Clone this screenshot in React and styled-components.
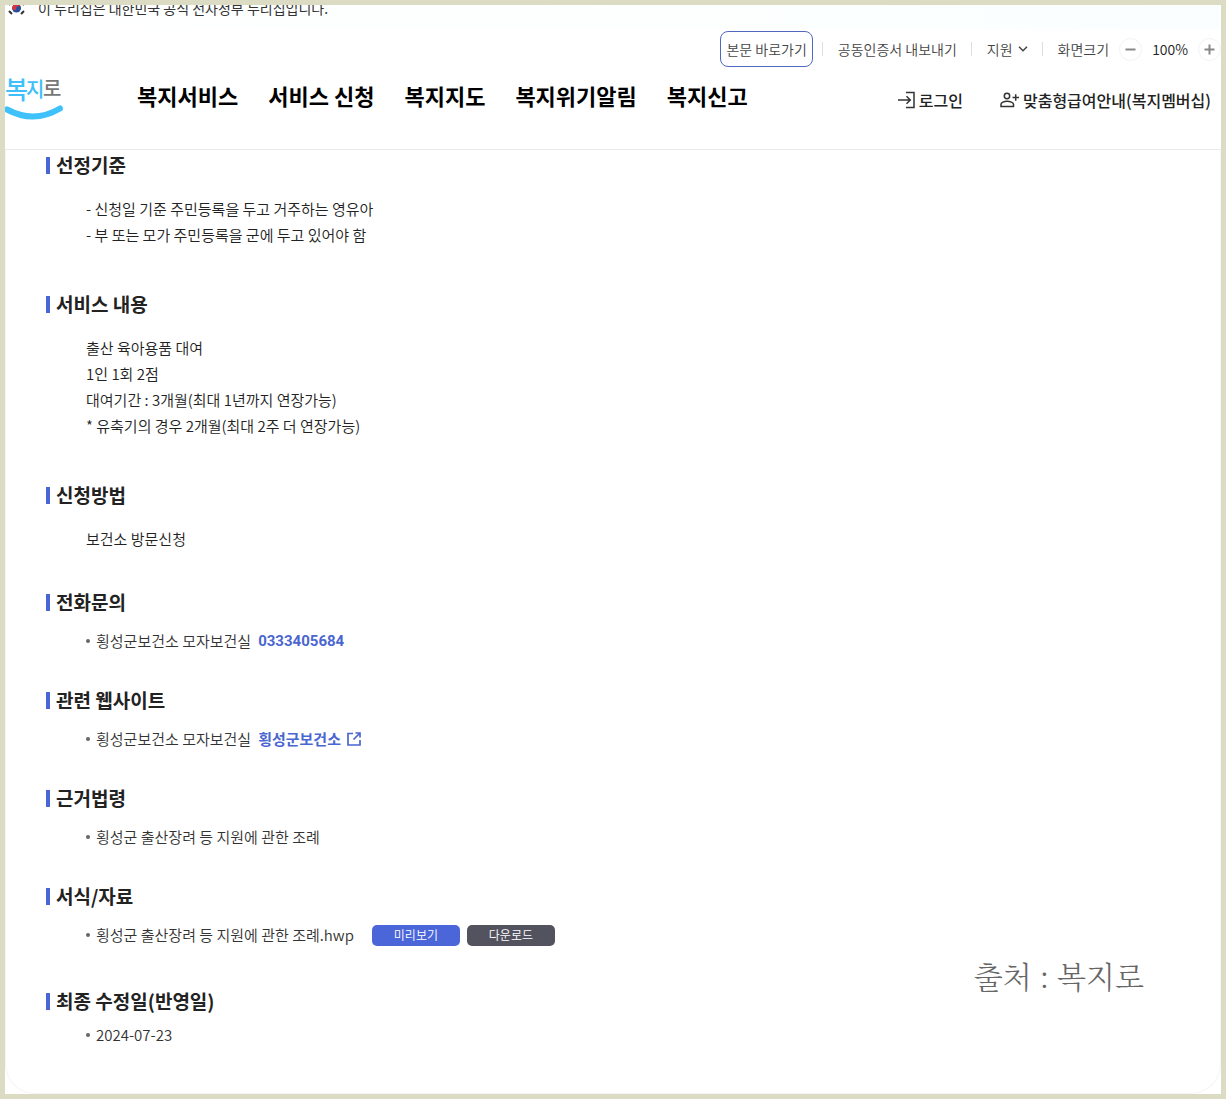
import React from "react";
import styled, { createGlobalStyle } from "styled-components";

const GlobalStyle = createGlobalStyle`
  * { box-sizing: border-box; }
  body {
    margin: 0;
    background: #dcdcc4;
    font-family: "Noto Sans CJK KR", "Noto Sans", sans-serif;
    color: #222;
  }
  a { color: inherit; text-decoration: none; }
  button { font: inherit; cursor: pointer; }
`;

const Frame = styled.div`
  display: flex;
  flex-direction: column;
  min-height: 100vh;
  padding: 5px;
`;

const Page = styled.div`
  position: relative;
  flex: 1;
  display: flex;
  flex-direction: column;
  background: #fff;
`;

const Header = styled.header`
  border-bottom: 1px solid #eaeaea;
  padding-bottom: 22px;
`;

const GovBanner = styled.div`
  display: flex;
  align-items: flex-end;
  height: 24px;
  overflow: hidden;
  background: linear-gradient(90deg, #fff, #fcfffe 40%, #fafefe);
`;

const GovNotice = styled.p`
  display: flex;
  align-items: center;
  flex: none;
  gap: 13px;
  height: 42px;
  margin: 0;
  padding-left: 3px;
  font-size: 14px;
  color: #333;
`;

const Utility = styled.div`
  display: flex;
  align-items: center;
  justify-content: flex-end;
  padding-top: 2px;
  font-size: 14px;
  font-weight: 350;
  line-height: 20px;
  color: #444;
`;

const SkipLink = styled.a`
  display: flex;
  align-items: center;
  height: 36px;
  padding: 0 5px;
  border: 1px solid #5068c0;
  border-radius: 8px;
`;

const Divider = styled.span`
  width: 1px;
  height: 14px;
  margin: 0 15px 0 ${(p) => p.$before || 14}px;
  background: #dedede;
`;

const SupportButton = styled.button`
  display: flex;
  align-items: center;
  gap: 5px;
  padding: 0;
  border: 0;
  background: none;
  color: inherit;
`;

const ZoomGroup = styled.div`
  display: flex;
  align-items: center;
  gap: 10px;
`;

const ZoomButton = styled.button`
  display: grid;
  place-items: center;
  width: 23px;
  height: 23px;
  padding: 0;
  border: 1px solid #f3f3f3;
  border-radius: 50%;
  background: #fff;
  color: #888;
`;

const ZoomValue = styled.output`
  color: #222;
`;

const NavRow = styled.div`
  display: flex;
  align-items: center;
  height: 60px;
`;

const LogoLink = styled.a`
  display: block;
  width: 60px;
  height: 56px;
`;

const MainNav = styled.nav`
  flex: 1;
  display: flex;
  gap: 30px;
  padding: 0 0 4px 72px;
  font-size: 22px;
  line-height: 32px;
  font-weight: 700;
  color: #000;
`;

const UserLinks = styled.div`
  display: flex;
  gap: 37px;
  padding: 5px 10px 0 0;
  font-size: 16px;
  line-height: 24px;
  font-weight: 500;
`;

const UserLink = styled.a`
  display: flex;
  align-items: center;
  gap: 4px;
`;

const Content = styled.main`
  flex: 1;
  padding: 0 40px 36px;
  border: 1px solid #f5f5f5;
  border-top: 0;
  border-radius: 0 0 30px 30px;
`;

const Section = styled.section`
  margin-bottom: ${(p) => p.$after}px;
  &:last-child { margin-bottom: 0; }
`;

const Title = styled.h2`
  display: flex;
  align-items: center;
  gap: 6px;
  margin: 0;
  font-size: 19px;
  line-height: 30px;
  font-weight: 700;
  &::before {
    content: "";
    width: 4px;
    height: 17px;
    background: #4a66d6;
  }
`;

const Paragraph = styled.p`
  margin: 16px 0 0;
  padding-left: 40px;
  font-size: 15px;
  font-weight: 350;
  line-height: 26px;
  white-space: pre-line;
`;

const List = styled.ul`
  margin: ${(p) => (p.$tight ? 6 : 11)}px 0 0;
  padding: 0 0 0 40px;
  list-style: none;
`;

const Item = styled.li`
  display: flex;
  align-items: center;
  font-size: 15px;
  font-weight: 350;
  line-height: 26px;
  color: #333;
  &::before {
    content: "";
    width: 4px;
    height: 4px;
    margin-right: 6px;
    border-radius: 50%;
    background: #666;
  }
`;

const ItemLink = styled.a`
  display: flex;
  align-items: center;
  gap: 6px;
  margin-left: 7px;
  font-family: ${(p) => (p.$digits ? "Roboto, sans-serif" : "inherit")};
  font-weight: 700;
  color: #4a66d0;
`;

const FileButtons = styled.div`
  display: flex;
  gap: 7px;
  margin-left: 18px;
`;

const FileButton = styled.button`
  display: grid;
  place-items: center;
  width: 88px;
  height: 21px;
  padding: 0;
  border: 0;
  border-radius: 5px;
  background: ${(p) => (p.$primary ? "#4a66d9" : "#535360")};
  color: #fff;
  && { font-size: 12px; line-height: 20px; }
`;

const Source = styled.p`
  position: absolute;
  right: 77px;
  bottom: 95px;
  margin: 0;
  font-family: "Noto Serif CJK KR", "Noto Sans CJK KR", serif;
  font-size: 30px;
  line-height: 48px;
  font-weight: 300;
  color: #666;
`;

const Flag = () => (
  <svg width="17" height="14" viewBox="0 0 17 14" aria-hidden="true">
    <path d="M4 7a4.5 4.5 0 0 1 9 0z" fill="#d8343f" />
    <path d="M4 7a4.5 4.5 0 0 0 9 0z" fill="#2450a0" />
    <circle cx="6.3" cy="7" r="2.2" fill="#d8343f" />
    <circle cx="10.7" cy="7" r="2.2" fill="#2450a0" />
    <path d="M1 10l3 3M13 13l3-3M1 4l3-3M13 1l3 3" stroke="#333" strokeWidth="2" />
  </svg>
);

const Logo = () => (
  <svg width="60" height="56" viewBox="0 0 60 56" role="img" aria-label="복지로">
    <g fontFamily="Noto Sans CJK KR" fontWeight="500">
      <text x="0" y="30" fontSize="25" fill="#40c0fa">복</text>
      <text x="21" y="28" fontSize="20" fill="#40c0fa">지</text>
      <text x="38" y="27" fontSize="20" fill="#777">로</text>
    </g>
    <path d="M2 40.500Q29 55 55 39.500" fill="none" stroke="#3fc1fb" strokeWidth="6" strokeLinecap="round" />
  </svg>
);

const Chevron = () => (
  <svg width="10" height="6" viewBox="0 0 10 6" fill="none" stroke="#444" strokeWidth="1.500" aria-hidden="true">
    <path d="M1 .8l4 4 4-4" />
  </svg>
);

const Minus = () => (
  <svg width="11" height="11" viewBox="0 0 11 11" stroke="currentColor" strokeWidth="2" aria-hidden="true">
    <path d="M.5 5.500h10" />
  </svg>
);

const Plus = () => (
  <svg width="11" height="11" viewBox="0 0 11 11" stroke="currentColor" strokeWidth="2" aria-hidden="true">
    <path d="M.5 5.500h10M5.500 .5v10" />
  </svg>
);

const LoginIcon = () => (
  <svg width="17" height="18" viewBox="0 0 17 18" fill="none" stroke="#333" strokeWidth="1.500" aria-hidden="true">
    <path d="M8 1.500h8v15H8M0 9h12M8.500 5.200L12.300 9l-3.800 3.800" />
  </svg>
);

const MemberIcon = () => (
  <svg width="19" height="16" viewBox="0 0 19 16" fill="none" stroke="#333" strokeWidth="1.500" aria-hidden="true">
    <circle cx="7" cy="4" r="2.700" />
    <path d="M1 14.500v-2.200C1 10.500 4 9.200 7 9.200s6.500 1.300 6.500 3.100v2.200zM12.500 5.500H19M15.700 2.300v6.400" />
  </svg>
);

const ExternalIcon = () => (
  <svg width="14" height="14" viewBox="0 0 14 14" fill="none" stroke="currentColor" strokeWidth="1.700" aria-hidden="true">
    <path d="M6 1.500H1v11.500h12V8M8.500 1H13v4.500M13 1L6.500 7.500" />
  </svg>
);

const menus = ["복지서비스", "서비스 신청", "복지지도", "복지위기알림", "복지신고"];

export default function App() {
  return (
    <Frame>
      <GlobalStyle />
      <Page>
        <Header>
          <GovBanner>
            <GovNotice>
              <Flag />
              이 누리집은 대한민국 공식 전자정부 누리집입니다.
            </GovNotice>
          </GovBanner>
          <Utility>
            <SkipLink href="#content">본문 바로가기</SkipLink>
            <Divider $before={9} />
            <a href="#cert">공동인증서 내보내기</a>
            <Divider />
            <SupportButton type="button" aria-haspopup="true">
              지원 <Chevron />
            </SupportButton>
            <Divider />
            <ZoomGroup role="group" aria-label="화면크기">
              <span>화면크기</span>
              <ZoomButton type="button" aria-label="축소"><Minus /></ZoomButton>
              <ZoomValue>100%</ZoomValue>
              <ZoomButton type="button" aria-label="확대"><Plus /></ZoomButton>
            </ZoomGroup>
          </Utility>
          <NavRow>
            <LogoLink href="#home"><Logo /></LogoLink>
            <MainNav>
              {menus.map((m) => <a href="#menu" key={m}>{m}</a>)}
            </MainNav>
            <UserLinks>
              <UserLink href="#login"><LoginIcon />로그인</UserLink>
              <UserLink href="#member"><MemberIcon />맞춤형급여안내(복지멤버십)</UserLink>
            </UserLinks>
          </NavRow>
        </Header>
        <Content id="content">
          <Section $after={41}>
            <Title>선정기준</Title>
            <Paragraph>{"- 신청일 기준 주민등록을 두고 거주하는 영유아\n- 부 또는 모가 주민등록을 군에 두고 있어야 함"}</Paragraph>
          </Section>
          <Section $after={41}>
            <Title>서비스 내용</Title>
            <Paragraph>{"출산 육아용품 대여\n1인 1회 2점\n대여기간 : 3개월(최대 1년까지 연장가능)\n* 유축기의 경우 2개월(최대 2주 더 연장가능)"}</Paragraph>
          </Section>
          <Section $after={35}>
            <Title>신청방법</Title>
            <Paragraph>보건소 방문신청</Paragraph>
          </Section>
          <Section $after={31}>
            <Title>전화문의</Title>
            <List>
              <Item>횡성군보건소 모자보건실<ItemLink $digits href="tel:0333405684">0333405684</ItemLink></Item>
            </List>
          </Section>
          <Section $after={31}>
            <Title>관련 웹사이트</Title>
            <List>
              <Item>횡성군보건소 모자보건실<ItemLink href="#site">횡성군보건소<ExternalIcon /></ItemLink></Item>
            </List>
          </Section>
          <Section $after={31}>
            <Title>근거법령</Title>
            <List><Item>횡성군 출산장려 등 지원에 관한 조례</Item></List>
          </Section>
          <Section $after={38}>
            <Title>서식/자료</Title>
            <List>
              <Item>
                횡성군 출산장려 등 지원에 관한 조례.hwp
                <FileButtons>
                  <FileButton type="button" $primary>미리보기</FileButton>
                  <FileButton type="button">다운로드</FileButton>
                </FileButtons>
              </Item>
            </List>
          </Section>
          <Section $after={0}>
            <Title>최종 수정일(반영일)</Title>
            <List $tight><Item>2024-07-23</Item></List>
          </Section>
        </Content>
        <Source>출처 : 복지로</Source>
      </Page>
    </Frame>
  );
}
